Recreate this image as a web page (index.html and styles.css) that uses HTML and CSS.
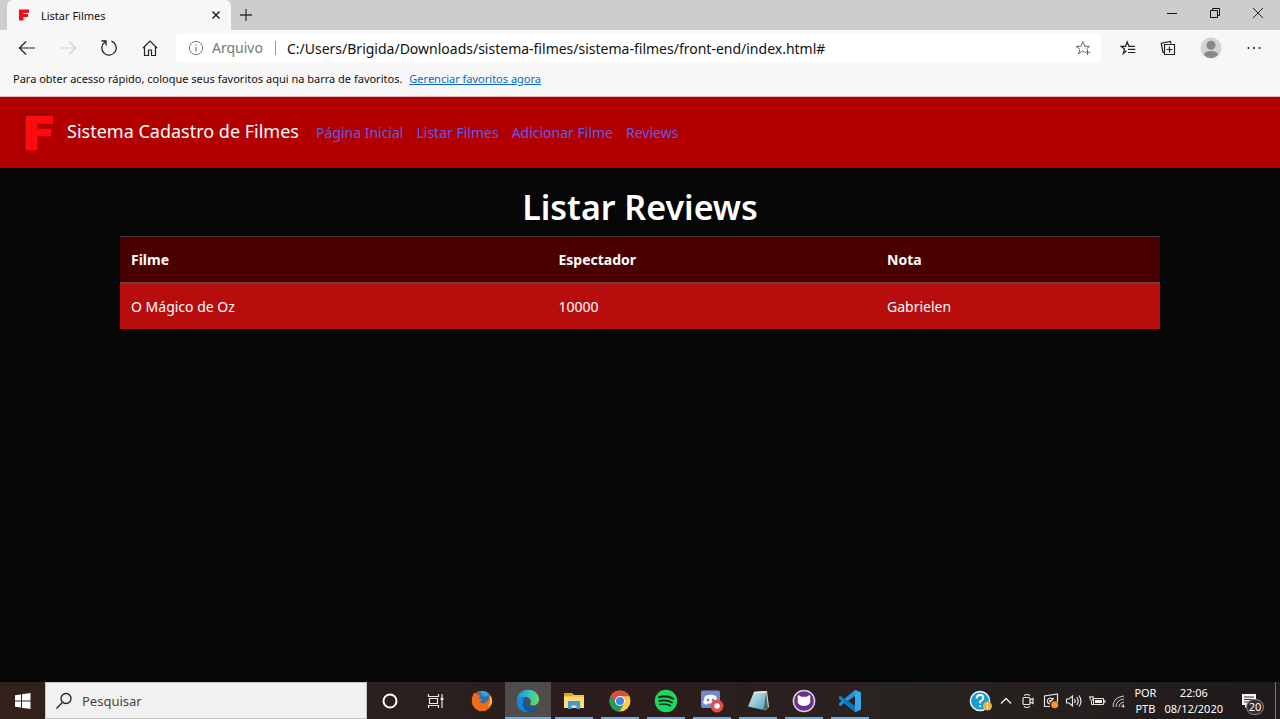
FILE: index.html
```html
<!DOCTYPE html>
<html lang="pt-BR">
<head>
<meta charset="utf-8">
<title>Listar Filmes</title>
<link rel="stylesheet" href="styles.css">
</head>
<body>
<div class="desktop">
  <header class="browser">
    <div class="tabstrip">
      <div class="tab">
        <svg class="favicon" width="12" height="12" viewBox="0 0 12 12"><path d="M1 0.5H11V4H5.500V5H10V8H5.500V11.500H1Z" fill="#ee1019"/></svg>
        <span class="tab-title">Listar Filmes</span>
        <button class="icon-btn tab-close" aria-label="Fechar guia"><svg width="10" height="10" viewBox="0 0 10 10"><path d="M1.500 1.500l7 7M8.500 1.500l-7 7" stroke="#222" stroke-width="1.500"/></svg></button>
      </div>
      <button class="icon-btn new-tab" aria-label="Nova guia"><svg width="14" height="14" viewBox="0 0 14 14"><path d="M7 1v12M1 7h12" stroke="#333" stroke-width="1.300"/></svg></button>
      <div class="window-controls">
        <button class="icon-btn" aria-label="Minimizar"><svg width="12" height="12" viewBox="0 0 12 12"><path d="M1 6.500h10" stroke="#111"/></svg></button>
        <button class="icon-btn" aria-label="Restaurar"><svg width="12" height="12" viewBox="0 0 12 12" fill="none" stroke="#111"><path d="M1.500 3.500h7v7h-7zM3.500 3.500v-2h7v7h-2"/></svg></button>
        <button class="icon-btn" aria-label="Fechar"><svg width="12" height="12" viewBox="0 0 12 12"><path d="M1 1l10 10M11 1L1 11" stroke="#222"/></svg></button>
      </div>
    </div>
    <div class="toolbar">
      <div class="nav-buttons">
        <button class="icon-btn" aria-label="Voltar"><svg width="18" height="18" viewBox="0 0 18 18" fill="none" stroke="#222" stroke-width="1.200"><path d="M17 9H2M8 2.500L1.500 9 8 15.500"/></svg></button>
        <button class="icon-btn" aria-label="Avançar"><svg width="18" height="18" viewBox="0 0 18 18" fill="none" stroke="#d2d2d2" stroke-width="1.200"><path d="M1 9h15M10 2.500L16.500 9 10 15.500"/></svg></button>
        <button class="icon-btn" aria-label="Atualizar"><svg width="18" height="18" viewBox="0 0 18 18" fill="none" stroke="#222" stroke-width="1.300"><path d="M11.500 2.200A7.200 7.200 0 1 1 5 3M1.500 2H6V6.500"/></svg></button>
        <button class="icon-btn" aria-label="Página inicial"><svg width="18" height="18" viewBox="0 0 18 18" fill="none" stroke="#222" stroke-width="1.200"><path d="M2 9L9 2l7 7M3.500 8v8.500h4v-5.500h3v5.500h4V8"/></svg></button>
      </div>
      <div class="address">
        <svg width="16" height="16" viewBox="0 0 16 16" fill="none" stroke="#777"><circle cx="8" cy="8" r="6.600"/><path d="M8 7v4.500M8 4.300v1.300" stroke-width="1.200"/></svg>
        <span class="scheme">Arquivo</span>
        <input class="url" aria-label="Endereço" value="C:/Users/Brigida/Downloads/sistema-filmes/sistema-filmes/front-end/index.html#">
        <button class="icon-btn" aria-label="Adicionar aos favoritos"><svg width="16" height="16" viewBox="0 0 16 16" fill="none" stroke="#666"><path d="M9.500 12L7.500 10.800 3.500 14 4.800 9.300 1 6.300h4.800L7.800 1.500l2 4.800h4.700L11.300 9M12.500 9.500v5.500M9.800 12.300h5.500"/></svg></button>
      </div>
      <div class="tool-buttons">
        <button class="icon-btn" aria-label="Favoritos"><svg width="16" height="16" viewBox="0 0 16 16" fill="none" stroke="#222" stroke-width="1.200"><path d="M6.500 10.800L3.300 13.500 4.500 9 1 6.300h4.500L7.200 2l1.700 4.300h6M8 9.300h7.300M8 12.500h7.300"/></svg></button>
        <button class="icon-btn" aria-label="Coleções"><svg width="16" height="16" viewBox="0 0 16 16" fill="none" stroke="#222" stroke-width="1.200"><path d="M4.500 4.500h10v10h-10zM9.500 6.500v6M6.500 9.500h6M4 12.500L2.800 12 1.300 3.200 10.500 1.400l.5 2.300"/></svg></button>
        <button class="icon-btn" aria-label="Perfil"><svg width="22" height="22" viewBox="0 0 22 22"><circle cx="11" cy="11" r="10.500" fill="#d5d3d1"/><circle cx="11" cy="8.300" r="4.500" fill="#8a8886"/><path d="M4 18C4 12.500 18 12.500 18 18Q11 24.500 4 18Z" fill="#8a8886"/></svg></button>
        <button class="icon-btn" aria-label="Mais opções"><svg width="16" height="16" viewBox="0 0 16 16" fill="#222"><circle cx="2.500" cy="8" r="1"/><circle cx="8" cy="8" r="1"/><circle cx="13.500" cy="8" r="1"/></svg></button>
      </div>
    </div>
    <div class="favorites">
      <span>Para obter acesso rápido, coloque seus favoritos aqui na barra de favoritos.</span>
      <a class="manage" href="#">Gerenciar favoritos agora</a>
    </div>
  </header>

  <nav class="navbar">
    <a class="brand" href="#">
      <svg width="32" height="40" viewBox="0 0 32 40"><path d="M1 1H29V10H13V14H28V24H14V38H1Z" fill="#8a0000"/><path d="M2.500 2.500H30V11H14.500V15.500H28V23.500H14.500V37.500H2.500Z" fill="#ff0a0f"/></svg>
      <span>Sistema Cadastro de Filmes</span>
    </a>
    <div class="links">
      <a href="#">Página Inicial</a>
      <a href="#">Listar Filmes</a>
      <a href="#">Adicionar Filme</a>
      <a href="#">Reviews</a>
    </div>
  </nav>

  <main class="page">
    <h1>Listar Reviews</h1>
    <table class="reviews">
      <colgroup><col class="col-film"><col class="col-viewer"><col></colgroup>
      <thead><tr><th scope="col">Filme</th><th scope="col">Espectador</th><th scope="col">Nota</th></tr></thead>
      <tbody><tr><td>O Mágico de Oz</td><td>10000</td><td>Gabrielen</td></tr></tbody>
    </table>
  </main>

  <footer class="taskbar">
    <button class="icon-btn start" aria-label="Iniciar"><svg width="16" height="16" viewBox="0 0 16 16" fill="#fff"><path d="M0 2.300L6 1.500V7.500H0zM7 1.300L15.500 0V7.500H7zM0 8.500H6V14.500L0 13.700zM7 8.500H15.500V16L7 14.700z"/></svg></button>
    <label class="search">
      <svg width="18" height="18" viewBox="0 0 18 18" fill="none" stroke="#222" stroke-width="1.300"><circle cx="11" cy="6.500" r="5"/><path d="M7.500 10.200L1.500 16.500"/></svg>
      <input type="text" placeholder="Pesquisar" aria-label="Pesquisar">
    </label>
    <div class="apps">
      <button class="app" aria-label="Cortana"><svg width="18" height="18" viewBox="0 0 18 18"><circle cx="9" cy="9" r="6.500" fill="none" stroke="#fff" stroke-width="2"/></svg></button>
      <button class="app" aria-label="Visão de tarefas"><svg width="18" height="18" viewBox="0 0 18 18" fill="none" stroke="#e8e8e8" stroke-width="1.200"><path d="M1.500 2v2.500h10V2M1.500 16v-2.500h10V16M2.500 6.500h8v5h-8zM15 2v3M15 8.500V16"/><path d="M13.700 5.500h2.600v2.700h-2.600z" fill="#fff" stroke="none"/></svg></button>
      <button class="app" aria-label="Firefox"><svg width="22" height="22" viewBox="0 0 22 22"><circle cx="11" cy="11" r="10.300" fill="#e8611b"/><circle cx="12" cy="8.700" r="7.500" fill="#2e6fb5"/><path d="M9 1.500q5-1.500 9 2.500l-3 3-4-2z" fill="#2aa8d8"/><path d="M1 8L3 2.500 5.300 4.500Q8 4 9.500 6L7.500 8.500 11 9.500 8.800 12Q13 16 17.500 10L18 5Q21.500 7 21 12 18 21.500 10 21 1 19.500 1 8z" fill="#f06b1c"/><path d="M18.500 5Q22 9 20.500 14L17 17Q20 11 18.500 5z" fill="#ffc82c"/></svg></button>
      <button class="app running active" aria-label="Microsoft Edge"><svg width="24" height="24" viewBox="0 0 24 24"><defs><linearGradient id="edgeTop" x1="0" x2="1"><stop offset="0" stop-color="#1a8fd8"/><stop offset=".55" stop-color="#2fc4c8"/><stop offset="1" stop-color="#68de52"/></linearGradient></defs><path d="M12 .8C19 .8 23 5.500 23 10.500 23 15 19.500 16.700 16.500 16.500 13.500 16.300 14 14.800 14.700 13.500 15.700 9.500 11.500 7.500 8 8 3 8.500.8 12 .8 12 .8 5 6 .8 12 .8z" fill="url(#edgeTop)"/><path d="M.8 12C2 8.200 6 7 9.500 8.200 7 10 6.500 18 12 21.500L15.500 22.700C8 25 .5 20 .8 12z" fill="#1688d8"/><path d="M9.500 8.200C7.500 11 9 17.500 15 18.500Q19 19 22 17C20 21 16 23.500 12.500 23.300 5 20 5.500 10.500 9.500 8.200z" fill="#0c58a5"/></svg></button>
      <button class="app running" aria-label="Explorador de Arquivos"><svg width="22" height="20" viewBox="0 0 22 20"><path d="M1 2h8l2 2h10v13H1z" fill="#f5c64d"/><path d="M1 2h8l1 2-1 1H1z" fill="#dfa31c"/><path d="M1 6h20v11H1z" fill="#ffdc75"/><path d="M5 18v-8h12v8h-3.500v-3.500h-5V18z" fill="#3b9bd8"/></svg></button>
      <button class="app running" aria-label="Google Chrome"><svg width="22" height="22" viewBox="0 0 22 22"><circle cx="11" cy="11" r="10.500" fill="#ffcd40"/><path d="M11 11L1.900 5.800A10.500 10.500 0 0 0 10.500 21.500L15.300 13.500z" fill="#1aa05b"/><path d="M1.900 5.800A10.500 10.500 0 0 1 20.200 6.200H11L6.500 13.500z" fill="#dd4c40"/><circle cx="11" cy="11" r="5" fill="#fff"/><circle cx="11" cy="11" r="4" fill="#4285e8"/></svg></button>
      <button class="app running" aria-label="Spotify"><svg width="24" height="24" viewBox="0 0 24 24"><circle cx="12" cy="12" r="11.200" fill="#1ed760"/><g fill="none" stroke="#15251b" stroke-linecap="round"><path d="M5 8.300Q12.500 6 19.200 9.700" stroke-width="2.200"/><path d="M5.500 12Q12 10.300 17.800 13.300" stroke-width="1.900"/><path d="M6 15.500Q11.500 14 16.500 16.700" stroke-width="1.600"/></g></svg></button>
      <button class="app running" aria-label="Discord"><svg width="24" height="24" viewBox="0 0 24 24"><path d="M3 1.500h15q2 0 2 2V21l-3-2H3q-2 0-2-2V3.500q0-2 2-2z" fill="#7289cf"/><path d="M5 7q5.500-2.500 11 0l2 7-3 2-1.300-1.600H7.300L6 16l-3-2z" fill="#fff"/><circle cx="8" cy="11" r="1.400" fill="#7289cf"/><circle cx="13" cy="11" r="1.400" fill="#7289cf"/><circle cx="17" cy="17" r="6.500" fill="#e64b4b"/><circle cx="17" cy="17" r="2.800" fill="#fff"/></svg></button>
      <button class="app running" aria-label="Bloco de Notas"><svg width="22" height="22" viewBox="0 0 22 22"><defs><linearGradient id="notePage" x2="1" y2="1"><stop stop-color="#d8f0f2"/><stop offset="1" stop-color="#4ba5b8"/></linearGradient></defs><path d="M7 2L20 1 22 17 18 20.500z" fill="#ddd5c5"/><path d="M7 2L19 1.800 16.500 20 1 16.500z" fill="url(#notePage)"/><path d="M19 2l2 16-4.500 2.500z" fill="#4e6468"/><path d="M7 2.500L19 2" stroke="#eee" stroke-width="1.500"/></svg></button>
      <button class="app running" aria-label="GitHub Desktop"><svg width="24" height="24" viewBox="0 0 24 24"><circle cx="12" cy="12" r="10.600" fill="#6b2e91" stroke="#d8d0dd" stroke-width="1.500"/><path d="M6 6.500Q6.500 5.800 9.200 7.800H14.800Q17.500 5.800 18 6.500 18.600 8 18.200 9.700 19.500 17 12 17T5.800 9.700Q5.400 8 6 6.500z" fill="#fff"/></svg></button>
      <button class="app running" aria-label="Visual Studio Code"><svg width="24" height="24" viewBox="0 0 24 24"><path d="M17 1L23 3.500V20.500L17 23 6 14 2.500 17 1 16V8L2.500 7 6 10z" fill="#2292dc"/><path d="M17 7v10l-7-5zM1 9.500v5l2.700-2.500z" fill="#292321"/><path d="M1 8l1.500-1L17 17v6z" fill="#0876bc"/><path d="M17 1l6 2.500v17L17 23z" fill="#35a8ed"/></svg></button>
    </div>
    <div class="tray">
      <svg width="24" height="22" viewBox="0 0 24 22"><circle cx="11" cy="11" r="9.600" fill="#159cd8" stroke="#f0f8fb" stroke-width="1.500"/><path d="M7.500 8.500Q7.800 5 11.200 5 14.500 5 14.300 8 14.200 10 11.100 11.700V13.300M11.100 15v2" fill="none" stroke="#fff" stroke-width="2"/><circle cx="18.500" cy="16" r="4.500" fill="#e8b44d"/><path d="M18.500 15v4M18.500 12.800v1.200" stroke="#fff"/></svg>
      <svg width="16" height="18" viewBox="-1 0 16 18"><path d="M2 11.500l5-5 5 5" fill="none" stroke="#eee" stroke-width="1.300"/></svg>
      <svg width="18" height="18" viewBox="-2 0 18 18" fill="none" stroke="#e5e5e5" stroke-width="1.200"><rect x="2" y="5.500" width="7" height="7" rx="1"/><path d="M9 8l3-1.500v5L9 10M3 3.500q3-2 6 0M3 14.500q3 2 6 0"/></svg>
      <svg width="18" height="18" viewBox="0 0 18 18" fill="none" stroke="#e5e5e5" stroke-width="1.200"><path d="M8 14.500H2.500V4l13-2v8M2.500 4.500V14M9 6Q5.500 6 5.500 9T8 12M8 10.500V8M8 10l3-3M8.500 6.500H12"/><circle cx="12.700" cy="12.800" r="3.500" fill="#f59a1d" stroke="none"/></svg>
      <svg width="18" height="18" viewBox="0 0 18 18" fill="none" stroke="#e5e5e5" stroke-width="1.200"><path d="M1.500 7h2.500l3.500-3v10L4 11H1.500zM9.500 7q1.500 2 0 4M11.700 5q3 4 0 8M14 3.500q4 5.500 0 11"/></svg>
      <svg width="18" height="18" viewBox="0 0 18 18" fill="none" stroke="#e5e5e5"><path d="M5.500 6.500h10v6h-10zM2 4v2.500q0 2 1.500 2T5 6.500V4M1.500 5h4M3.500 8.500v4h2M15.500 8.500h1.500v2h-1.500"/><path d="M7 8h7v3H7z" fill="#eee" stroke="none"/></svg>
      <svg width="16" height="18" viewBox="0 0 16 18" fill="none" stroke="#ccc"><path d="M2 15Q2 5 13 4M5 15Q5 8 13 7M8 15Q8 11 13 10M10.500 15q0-2 2.500-2.500"/><circle cx="12.500" cy="14.500" r="1" fill="#eee" stroke="none"/></svg>
      <div class="lang"><span>POR</span><span>PTB</span></div>
      <div class="clock"><span>22:06</span><span>08/12/2020</span></div>
      <button class="icon-btn notices" aria-label="20 notificações"><svg width="16" height="16" viewBox="0 0 16 16"><path d="M1 1h14v11H7l-3 3v-3H1z" fill="#f4f4f4"/><path d="M3 4h10M3 6.500h10M3 9h7" stroke="#333"/></svg><span class="badge">20</span></button>
      <span class="peek"></span>
    </div>
  </footer>
</div>
</body>
</html>
```

FILE: styles.css
```css
* { box-sizing: border-box; }
body {
  margin: 0;
  background: #060606;
  font-family: "Noto Sans", "Open Sans", sans-serif;
  font-size: 14px;
}
svg { display: block; flex: none; }
button, input { font: inherit; color: inherit; border: 0; padding: 0; background: none; }
.icon-btn { display: flex; align-items: center; justify-content: center; }
.desktop { display: flex; flex-direction: column; min-height: 100vh; }

.browser { background: #f7f7f7; color: #111; border-bottom: 1px solid #e2bcbc; }
.tabstrip { display: flex; align-items: center; height: 30px; padding-left: 7px; background: #cdcdcd; }
.tab {
  display: flex;
  align-items: center;
  gap: 11px;
  width: 224px;
  height: 30px;
  padding: 0 10px 0 11px;
  background: #f7f7f7;
  border-radius: 6px 6px 0 0;
}
.tab-title { flex: 1; font-size: 11px; }
.new-tab { width: 30px; height: 30px; }
.window-controls { display: flex; gap: 31px; margin-left: auto; padding: 0 16px 4px 0; }
.toolbar { display: flex; align-items: center; height: 36px; padding-right: 18px; }
.nav-buttons { display: flex; gap: 23px; padding: 0 17px 0 18px; }
.address {
  display: flex;
  flex: 1;
  align-items: center;
  height: 28px;
  padding: 0 10px 0 12px;
  background: #fff;
  border-radius: 3px;
}
.scheme { margin-left: 8px; padding-right: 12px; border-right: 1px solid #999; line-height: 14px; color: #777; }
.url { flex: 1; min-width: 0; margin-left: 11px; }
.tool-buttons { display: flex; align-items: center; gap: 24px; padding-left: 19px; }
.favorites { display: flex; gap: 7px; padding: 6px 13px 10px; font-size: 11px; line-height: 14px; }
.manage { color: #0b66c8; }

.navbar { display: flex; align-items: center; gap: 17px; height: 71px; padding: 0 23px; background: #b20000; }
.brand { display: flex; align-items: center; gap: 12px; color: #fff; font-size: 18px; text-decoration: none; }
.brand span { padding-bottom: 4px; }
.links { display: flex; gap: 13px; }
.links a { color: #5b5bed; text-decoration: none; }

.page { flex: 1; width: 100%; max-width: 1070px; margin: 0 auto; padding: 17px 15px; color: #fff; }
h1 { margin: 0 0 6px; font-size: 34px; line-height: 45px; font-weight: 600; text-align: center; }
.reviews { width: 100%; border-collapse: collapse; table-layout: fixed; line-height: 23px; }
.col-film { width: 41.1%; }
.col-viewer { width: 31.6%; }
.reviews th, .reviews td { padding: 11px; text-align: left; border-top: 1px solid #454040; }
.reviews th { background: #4b0000; border-bottom: 2px solid #664040; }
.reviews td { background: #b80d0d; }

.taskbar { display: flex; height: 37px; background: linear-gradient(90deg, #33201b, #29211f 30%, #2d1c1c 50%, #292321 68%, #211a1b); color: #fff; }
.start { width: 45px; }
.search { display: flex; align-items: center; gap: 9px; width: 322px; padding-left: 9px; background: #f1f1f1; border: 1px solid #c5c5c5; color: #333; }
.search input { flex: 1; min-width: 0; font-size: 13px; }
.search input::placeholder { color: #444; opacity: 1; }
.apps { display: flex; }
.app { display: flex; align-items: center; justify-content: center; width: 46px; padding: 0 4px; }
.running { background: linear-gradient(#76acd8, #76acd8) center bottom / 38px 2px no-repeat; }
.active { background: linear-gradient(#76acd8, #76acd8) center bottom / 46px 2px no-repeat #504c4b; }
.tray { display: flex; align-items: center; gap: 5px; margin-left: auto; font-size: 11px; line-height: 16px; }
.lang, .clock { display: flex; flex-direction: column; align-items: center; }
.lang { margin-left: 2px; }
.clock { margin-left: 3px; }
.notices { position: relative; width: 42px; height: 37px; }
.badge {
  position: absolute;
  left: 18px;
  top: 17px;
  width: 18px;
  border: 1px solid #888;
  border-radius: 9px;
  background: #35302f;
  font-size: 11px;
  line-height: 14px;
}
.peek { width: 5px; height: 37px; border-left: 1px solid #777; }
```
